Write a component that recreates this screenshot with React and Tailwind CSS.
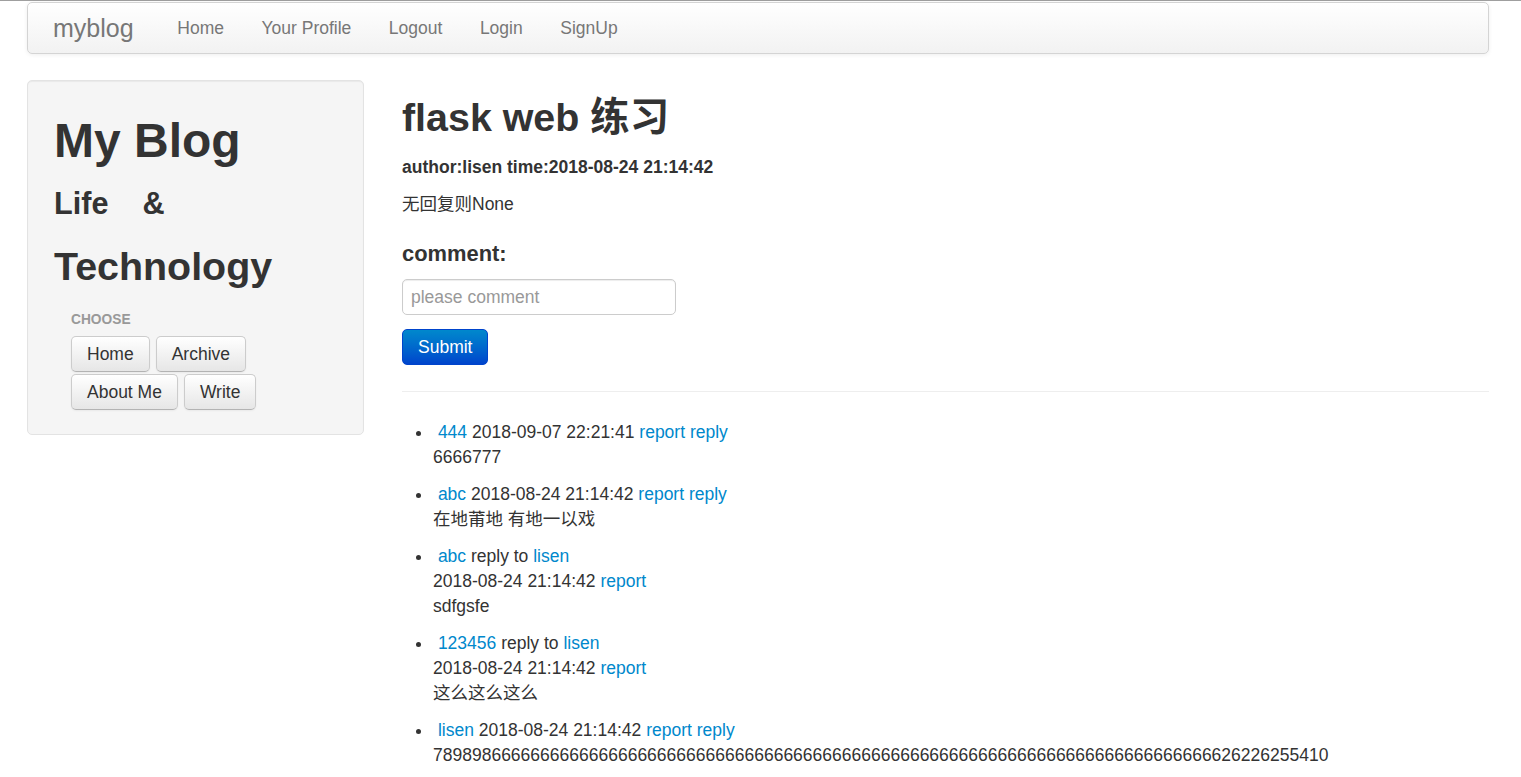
const font = { fontFamily: '"Liberation Sans", "Noto Sans CJK SC", sans-serif' };

const navLinks = ["Home", "Your Profile", "Logout", "Login", "SignUp"];

const longText =
  "789898" + "6".repeat(75) + "26226255410";

const comments = [
  { user: "444", time: "2018-09-07 22:21:41", body: "6666777", reply: true },
  { user: "abc", time: "2018-08-24 21:14:42", body: "在地莆地 有地一以戏", reply: true },
  { user: "abc", to: "lisen", time: "2018-08-24 21:14:42", body: "sdfgsfe" },
  { user: "123456", to: "lisen", time: "2018-08-24 21:14:42", body: "这么这么这么" },
  { user: "lisen", time: "2018-08-24 21:14:42", body: longText, reply: true },
];

const Btn = ({ children }) => (
  <button className="h-[36px] px-[15px] rounded-[5px] border border-[#cccccc] border-b-[#b3b3b3] bg-gradient-to-b from-white to-[#e6e6e6] text-[17.5px] text-[#333] shadow-[inset_0_1px_0_rgba(255,255,255,0.2),0_1px_2px_rgba(0,0,0,0.05)]">
    {children}
  </button>
);

const Link = ({ children }) => <a className="text-[#0088cc]">{children}</a>;

const App = () => {
  return (
    <div style={font} className="min-h-screen bg-white text-[#333] text-[17.5px] leading-[25px]">
      <div className="h-px bg-[#9f9f9f]" />
      <div className="pl-[27px] pr-[32px]">
        <div className="mt-px h-[52px] flex items-center rounded-[5px] border border-[#d4d4d4] bg-gradient-to-b from-white to-[#f2f2f2] shadow-[0_1px_4px_rgba(0,0,0,0.065)]">
          <span className="pl-[25px] pr-[25px] text-[25px] text-[#777]">myblog</span>
          {navLinks.map((l) => (
            <a key={l} className="px-[18.75px] text-[17.5px] text-[#777]">
              {l}
            </a>
          ))}
        </div>

        <div className="mt-[26px] flex gap-[38px]">
          <div className="w-[337px] shrink-0 self-start rounded-[5px] border border-[#e3e3e3] bg-[#f5f5f5] px-[26px] py-[24px] shadow-[inset_0_1px_1px_rgba(0,0,0,0.05)]">
            <h1 className="mt-[11px] text-[48px] leading-[50px] font-bold">My Blog</h1>
            <h3 className="mt-[12px] text-[30.6px] leading-[50px] font-bold">
              Life{"\u00a0\u00a0\u00a0\u00a0"}&amp;
            </h3>
            <h2 className="mt-[13px] text-[39.4px] leading-[50px] font-bold">Technology</h2>
            <div className="pl-[17px]">
              <div className="mt-[16px] text-[13.75px] leading-[25px] font-bold uppercase text-[#999]">
                Choose
              </div>
              <div className="mt-[4px] flex gap-[6px]">
                <Btn>Home</Btn>
                <Btn>Archive</Btn>
              </div>
              <div className="mt-[2px] flex gap-[6px]">
                <Btn>About Me</Btn>
                <Btn>Write</Btn>
              </div>
            </div>
          </div>

          <div className="flex-1 min-w-0">
            <h2 className="mt-[12px] text-[39.4px] leading-[50px] font-bold">flask web 练习</h2>
            <h5 className="mt-[13px] text-[17.5px] leading-[25px] font-bold">
              author:lisen time:2018-08-24 21:14:42
            </h5>
            <p className="mt-[12px]">无回复则None</p>
            <h4 className="mt-[24px] text-[21.9px] leading-[25px] font-bold">comment:</h4>
            <input
              className="mt-[13px] block w-[274px] h-[36px] px-[8px] rounded-[5px] border border-[#cccccc] text-[17.5px] placeholder:text-[#999] shadow-[inset_0_1px_1px_rgba(0,0,0,0.075)] outline-none"
              placeholder="please comment"
            />
            <button className="mt-[14px] h-[36px] px-[15px] rounded-[5px] border border-[#0044cc] bg-gradient-to-b from-[#0088cc] to-[#0044cc] text-white text-[17.5px]">
              Submit
            </button>
            <div className="mt-[26px] border-t border-[#eeeeee]" />
            <ul className="mt-[28px] list-disc pl-[31px]">
              {comments.map((c, i) => (
                <li key={i} className="mb-[12px]">
                  {"\u00a0"}
                  <Link>{c.user}</Link>{" "}
                  {c.to ? (
                    <>
                      reply to <Link>{c.to}</Link>
                      <br />
                      {c.time} <Link>report</Link>
                    </>
                  ) : (
                    <>
                      {c.time} <Link>report</Link> <Link>reply</Link>
                    </>
                  )}
                  <br />
                  {c.body}
                </li>
              ))}
            </ul>
          </div>
        </div>
      </div>
    </div>
  );
};

export default App;
